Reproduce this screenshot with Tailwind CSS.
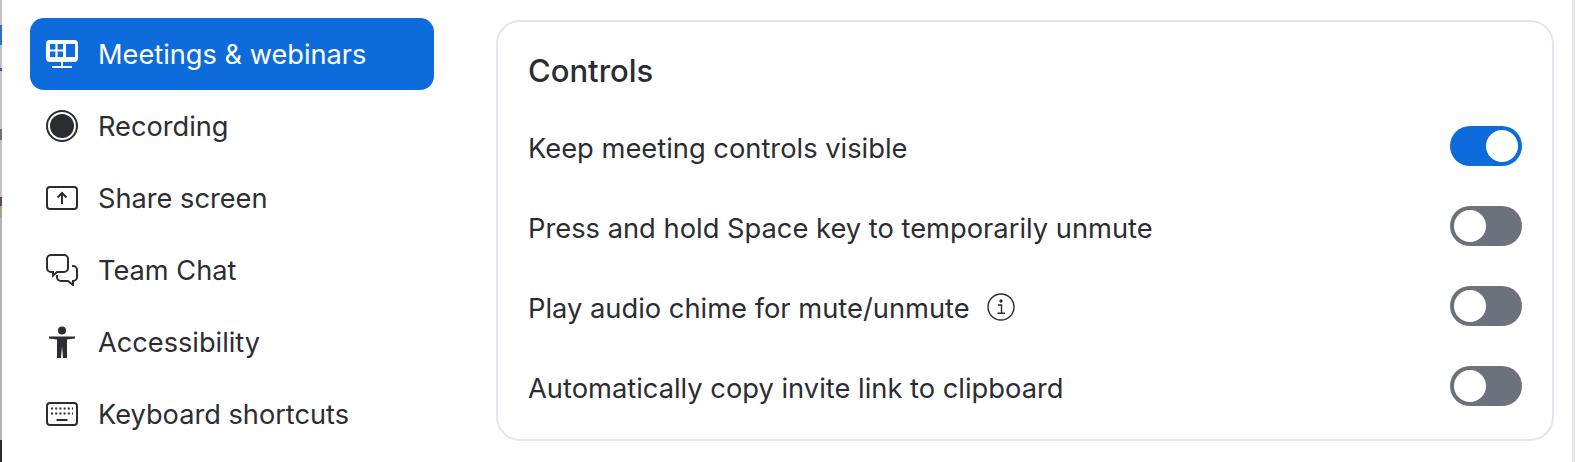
<!DOCTYPE html>
<html lang="en">
<head>
  <meta charset="UTF-8" />
  <title>Settings</title>
  <script src="https://cdn.jsdelivr.net/npm/@tailwindcss/browser@4"></script>
</head>
<body class="bg-white h-[462px] overflow-hidden font-['Inter',sans-serif] text-[#2b2d33]">
  <div class="flex h-[462px]">
    <!-- sliver of the window behind -->
    <div class="w-[2px] shrink-0 flex flex-col bg-[#c2c2c4]">
      <div class="h-[25px]"></div>
      <div class="h-[20px] bg-[#2f6fc4]"></div>
      <div class="h-[23px]"></div>
      <div class="h-[3px] bg-[#1f66c8]"></div>
      <div class="h-[58px]"></div>
      <div class="h-[11px] bg-[#6f7074]"></div>
      <div class="h-[57px]"></div>
      <div class="h-[9px] bg-[#5d4a5c]"></div>
      <div class="h-[12px] bg-[#a3a585]"></div>
      <div class="h-[222px] bg-[#b4b4b6]"></div>
      <div class="h-[22px] bg-[#2a2a2c]"></div>
    </div>

    <nav class="w-[432px] shrink-0 pt-[18px] pl-[28px] flex flex-col text-[27.2px]">
      <a class="h-[72px] w-[404px] rounded-[14px] bg-[#0e6bdc] text-white flex items-center pl-[16px] gap-[20px]">
        <svg class="w-[32px] h-[32px]" viewBox="0 0 32 32" fill="none">
          <path fill="white" fill-rule="evenodd" d="M4 2h24a4 4 0 0 1 4 4v14a4 4 0 0 1-4 4H4a4 4 0 0 1-4-4V6a4 4 0 0 1 4-4zM4 6v5.400h5.400V6zm7.600 0v5.400H17V6zM20 6v13h9V6zM4 13.600V19h5.400v-5.400zm7.600 0V19H17v-5.400z"/>
          <path fill="white" d="M15 24h2v4h-2zM6 28h20v2H6z"/>
        </svg>
        <span class="pt-[2px]">Meetings &amp; webinars</span>
      </a>
      <a class="h-[72px] flex items-center pl-[16px] gap-[20px]">
        <svg class="w-[32px] h-[32px]" viewBox="0 0 32 32" fill="none">
          <circle cx="16" cy="16" r="15" stroke="#2b2d33" stroke-width="2"/>
          <circle cx="16" cy="16" r="12" fill="#2b2d33"/>
        </svg>
        <span class="pt-[2px]">Recording</span>
      </a>
      <a class="h-[72px] flex items-center pl-[16px] gap-[20px]">
        <svg class="w-[32px] h-[32px]" viewBox="0 0 32 32" fill="none" stroke="#2b2d33" stroke-width="2">
          <rect x="1" y="5" width="30" height="22" rx="3"/>
          <path d="M16 22V11M11.500 15.500 16 11l4.500 4.500"/>
        </svg>
        <span class="pt-[2px]">Share screen</span>
      </a>
      <a class="h-[72px] flex items-center pl-[16px] gap-[20px]">
        <svg class="w-[32px] h-[32px]" viewBox="0 0 32 32" fill="none" stroke="#2b2d33" stroke-width="2">
          <path d="M5 1h13a4 4 0 0 1 4 4v9a4 4 0 0 1-4 4H11l-4 3.500V18H5a4 4 0 0 1-4-4V5a4 4 0 0 1 4-4z"/>
          <path d="M26 12h1a4 4 0 0 1 4 4v7a4 4 0 0 1-4 4v4l-5-4h-7a4 4 0 0 1-4-4v-2"/>
        </svg>
        <span class="pt-[2px]">Team Chat</span>
      </a>
      <a class="h-[72px] flex items-center pl-[16px] gap-[20px]">
        <svg class="w-[32px] h-[32px]" viewBox="0 0 32 32" fill="#2b2d33">
          <circle cx="16" cy="4.500" r="4"/>
          <path d="M3 10.500h26v2l-8 1V32h-4l-1-12-1 12h-4V13.500l-8-1z"/>
        </svg>
        <span class="pt-[2px]">Accessibility</span>
      </a>
      <a class="h-[72px] flex items-center pl-[16px] gap-[20px]">
        <svg class="w-[32px] h-[32px]" viewBox="0 0 32 32" fill="none">
          <rect x="1" y="5" width="30" height="22" rx="3" stroke="#2b2d33" stroke-width="2"/>
          <path stroke="#2b2d33" stroke-width="1.800" stroke-dasharray="2 2.200" d="M5 10.500h22M5 15.500h22"/>
          <path stroke="#2b2d33" stroke-width="2" d="M10.500 22h11"/>
        </svg>
        <span class="pt-[2px]">Keyboard shortcuts</span>
      </a>
    </nav>

    <main class="w-[1058px] h-[421px] shrink-0 ml-[62px] mt-[20px] rounded-[24px] border-2 border-[#e3e6ea] pl-[30px] pr-[30px] pt-[29px]">
      <h2 class="text-[31px] font-medium leading-[40px]">Controls</h2>
      <div class="mt-[35px] flex flex-col gap-[40px] text-[27.3px]">
        <div class="flex items-center justify-between h-[40px]">
          <span class="pt-[6px]">Keep meeting controls visible</span>
          <span class="w-[72px] h-[40px] rounded-full bg-[#0e6bdc] flex items-center justify-end pr-[4px]"><span class="w-[32px] h-[32px] rounded-full bg-white"></span></span>
        </div>
        <div class="flex items-center justify-between h-[40px]">
          <span class="pt-[6px]">Press and hold Space key to temporarily unmute</span>
          <span class="w-[72px] h-[40px] rounded-full bg-[#6b727c] flex items-center pl-[4px]"><span class="w-[32px] h-[32px] rounded-full bg-white"></span></span>
        </div>
        <div class="flex items-center justify-between h-[40px]">
          <span class="pt-[6px] flex items-center gap-[17px]">Play audio chime for mute/unmute
            <svg class="w-[28px] h-[28px] -mt-[5px]" viewBox="0 0 28 28" fill="none" stroke="#2b2d33" stroke-width="1.400">
              <circle cx="14" cy="14" r="13"/>
              <path d="M11 12h3.500v8.200M10.500 20.200h7.500"/>
              <circle cx="14" cy="8" r="1" fill="#2b2d33"/>
            </svg>
          </span>
          <span class="w-[72px] h-[40px] rounded-full bg-[#6b727c] flex items-center pl-[4px]"><span class="w-[32px] h-[32px] rounded-full bg-white"></span></span>
        </div>
        <div class="flex items-center justify-between h-[40px]">
          <span class="pt-[6px]">Automatically copy invite link to clipboard</span>
          <span class="w-[72px] h-[40px] rounded-full bg-[#6b727c] flex items-center pl-[4px]"><span class="w-[32px] h-[32px] rounded-full bg-white"></span></span>
        </div>
      </div>
    </main>

    <div class="ml-auto w-[3px] mr-[1px] bg-[#e6e6e8] shrink-0"></div>
  </div>
</body>
</html>
